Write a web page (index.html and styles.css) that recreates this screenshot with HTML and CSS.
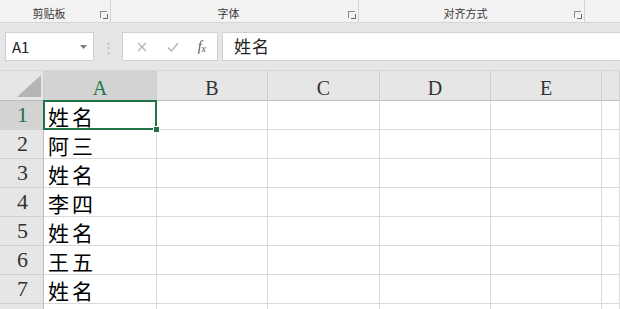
FILE: index.html
```html
<!DOCTYPE html>
<html lang="zh-CN">
<head>
  <meta charset="UTF-8">
  <title>工作簿</title>
  <link rel="stylesheet" href="styles.css">
</head>
<body>
  <!-- Ribbon group labels -->
  <div class="ribbon">
    <div class="group g-clip"><span>剪贴板</span><i class="launcher"></i></div>
    <div class="group g-font"><span>字体</span><i class="launcher"></i></div>
    <div class="group g-align"><span>对齐方式</span><i class="launcher"></i></div>
    <div class="group g-rest"></div>
  </div>

  <!-- Formula bar -->
  <div class="formula-bar">
    <div class="name-box">
      <span>A1</span>
      <svg class="caret" width="7" height="4" viewBox="0 0 7 4"><path d="M0 0h7L3.5 4z" fill="#7a7a7a"/></svg>
    </div>
    <div class="grip">⋮</div>
    <div class="fx-buttons">
      <svg width="12" height="12" viewBox="0 0 12 12"><path d="M2 2l8 8M10 2l-8 8" stroke="#b3b3b3" stroke-width="1.3"/></svg>
      <svg width="14" height="12" viewBox="0 0 14 12"><path d="M2 6.5l3.5 3.5L12 2" stroke="#b3b3b3" stroke-width="1.4" fill="none"/></svg>
      <span class="fx">f<sub>x</sub></span>
    </div>
    <div class="fx-input">姓名</div>
  </div>

  <!-- Sheet grid -->
  <div class="sheet">
    <div class="corner"><i></i></div>
    <div class="col-head sel">A</div>
    <div class="col-head">B</div>
    <div class="col-head">C</div>
    <div class="col-head">D</div>
    <div class="col-head">E</div>
    <div class="col-head"></div>

    <div class="row-head sel">1</div>
    <div class="cell active">姓名<span class="handle"></span></div>
    <div class="cell"></div><div class="cell"></div><div class="cell"></div><div class="cell"></div><div class="cell"></div>

    <div class="row-head">2</div>
    <div class="cell">阿三</div>
    <div class="cell"></div><div class="cell"></div><div class="cell"></div><div class="cell"></div><div class="cell"></div>

    <div class="row-head">3</div>
    <div class="cell">姓名</div>
    <div class="cell"></div><div class="cell"></div><div class="cell"></div><div class="cell"></div><div class="cell"></div>

    <div class="row-head">4</div>
    <div class="cell">李四</div>
    <div class="cell"></div><div class="cell"></div><div class="cell"></div><div class="cell"></div><div class="cell"></div>

    <div class="row-head">5</div>
    <div class="cell">姓名</div>
    <div class="cell"></div><div class="cell"></div><div class="cell"></div><div class="cell"></div><div class="cell"></div>

    <div class="row-head">6</div>
    <div class="cell">王五</div>
    <div class="cell"></div><div class="cell"></div><div class="cell"></div><div class="cell"></div><div class="cell"></div>

    <div class="row-head">7</div>
    <div class="cell">姓名</div>
    <div class="cell"></div><div class="cell"></div><div class="cell"></div><div class="cell"></div><div class="cell"></div>

    <div class="row-head"></div>
    <div class="cell"></div>
    <div class="cell"></div><div class="cell"></div><div class="cell"></div><div class="cell"></div><div class="cell"></div>
  </div>
</body>
</html>
```

FILE: styles.css
```css
/* General */
body {
  margin: 0;
  width: 620px;
  height: 309px;
  overflow: hidden;
  background-color: #e6e6e6;
  font-family: "Noto Sans CJK SC", "Noto Sans", sans-serif;
}

/* Ribbon */
.ribbon {
  display: flex;
  height: 22px;
  background-color: #f3f3f3;
  border-bottom: 1px solid #d6d6d6;
}

.group {
  position: relative;
  display: flex;
  align-items: center;
  justify-content: center;
  box-sizing: border-box;
  padding-right: 12px;
  border-right: 1px solid #d4d4d4;
  font-size: 11px;
  color: #3a3a3a;
  line-height: 1;
}

.group span {
  margin-top: 4px;
}

.g-clip { width: 111px; }
.g-font { width: 248px; }
.g-align { width: 226px; }
.g-rest { flex: 1; border-right: none; }

.launcher {
  position: absolute;
  right: 3px;
  top: 11px;
  width: 6px;
  height: 6px;
  border-left: 1px solid #8a8a8a;
  border-top: 1px solid #8a8a8a;
}

.launcher::after {
  content: "";
  position: absolute;
  left: 2px;
  top: 2px;
  width: 4px;
  height: 4px;
  border-right: 1px solid #6a6a6a;
  border-bottom: 1px solid #6a6a6a;
}

/* Formula bar */
.formula-bar {
  display: flex;
  align-items: center;
  height: 47px;
  padding-left: 5px;
}

.name-box {
  display: flex;
  align-items: center;
  justify-content: space-between;
  box-sizing: border-box;
  width: 89px;
  height: 29px;
  padding: 0 6px 0 6px;
  background-color: #fff;
  border: 1px solid #d0d0d0;
  font-size: 15px;
  color: #222;
}

.name-box span {
  margin-top: -1px;
}

.grip {
  width: 28px;
  text-align: center;
  color: #b5b5b5;
  font-size: 13px;
}

.fx-buttons {
  display: flex;
  align-items: center;
  justify-content: space-around;
  box-sizing: border-box;
  width: 96px;
  height: 29px;
  padding: 0 2px 0 4px;
  background-color: #fff;
  border: 1px solid #d0d0d0;
}

.fx {
  font-family: "Liberation Serif", serif;
  font-style: italic;
  font-size: 14px;
  color: #555;
}

.fx sub {
  font-size: 10px;
  vertical-align: -1px;
}

.fx-input {
  flex: 1;
  box-sizing: border-box;
  height: 29px;
  margin-left: 4px;
  padding-left: 11px;
  background-color: #fff;
  border: 1px solid #d0d0d0;
  border-right: none;
  font-size: 17px;
  letter-spacing: 1px;
  line-height: 26px;
  color: #222;
}

/* Sheet grid */
.sheet {
  display: grid;
  grid-template-columns: 44px 113px 111px 112px 111px 111px 1fr;
  grid-template-rows: 30px repeat(8, 29px);
  background-color: #fff;
  border-top: 1px solid #d8d8d8;
}

.sheet > div {
  box-sizing: border-box;
}

.corner {
  position: relative;
  background-color: #e6e6e6;
  border-right: 1px solid #cfcfcf;
  border-bottom: 1px solid #bdbdbd;
}

.corner i {
  position: absolute;
  right: 2px;
  bottom: 3px;
  width: 0;
  height: 0;
  border-left: 24px solid transparent;
  border-bottom: 22px solid #b5b5b5;
}

.col-head {
  display: flex;
  align-items: center;
  justify-content: center;
  padding-top: 5px;
  background-color: #e6e6e6;
  border-right: 1px solid #cfcfcf;
  border-bottom: 1px solid #bdbdbd;
  font-family: "Liberation Serif", serif;
  font-size: 20px;
  color: #333;
}

.row-head {
  display: flex;
  align-items: center;
  justify-content: center;
  padding-left: 2px;
  background-color: #e6e6e6;
  border-right: 1px solid #bdbdbd;
  border-bottom: 1px solid #cfcfcf;
  font-family: "Liberation Serif", serif;
  font-size: 22px;
  color: #333;
}

.col-head.sel,
.row-head.sel {
  background-color: #d3d3d3;
  color: #217346;
}

.col-head.sel {
  border-bottom: 1px solid #217346;
}

.cell {
  display: flex;
  align-items: center;
  padding: 3px 0 0 4px;
  border-right: 1px solid #d9d9d9;
  border-bottom: 1px solid #d9d9d9;
  font-size: 21px;
  letter-spacing: 3px;
  color: #000;
  line-height: 1;
}

.cell.active {
  position: relative;
}

.cell.active::before {
  content: "";
  position: absolute;
  left: -1px;
  top: -1px;
  right: -1px;
  bottom: -1px;
  border: 2px solid #217346;
}

.handle {
  position: absolute;
  right: -4px;
  bottom: -4px;
  width: 5px;
  height: 5px;
  background-color: #217346;
  border: 1px solid #fff;
}
```
